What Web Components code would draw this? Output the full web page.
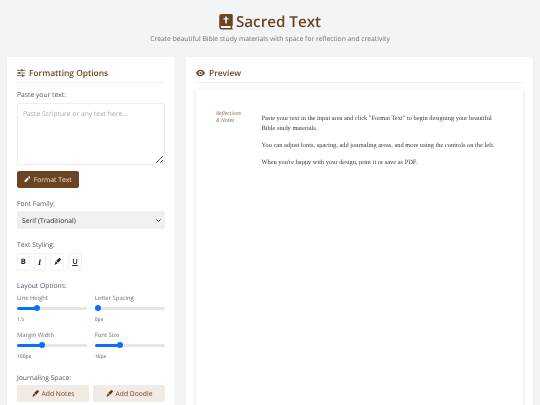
<!DOCTYPE html>
<html lang="en">
<head>
<meta charset="utf-8">
<title>Sacred Text</title>
<style>
html, body { margin: 0; height: 405px; overflow: hidden; background: #f3f4f6; }
body { font-family: "Open Sans", "Noto Sans", sans-serif; color: #374151; text-rendering: geometricPrecision; }
</style>
</head>
<body>
<sacred-app></sacred-app>

<script>
const BROWN = '#6b4423';

const icons = {
  sliders: '<svg viewBox="0 0 12 12" width="8" height="8"><g stroke="currentColor" stroke-width="1.2" fill="none"><path d="M0 2h12M0 6h12M0 10h12"/></g><g fill="currentColor"><rect x="6.500" y=".4" width="2" height="3.200" rx=".5"/><rect x="2.500" y="4.400" width="2" height="3.200" rx=".5"/><rect x="7.500" y="8.400" width="2" height="3.200" rx=".5"/></g></svg>',
  eye: '<svg viewBox="0 0 14 12" width="9" height="8"><path fill="currentColor" fill-rule="evenodd" d="M7 1C3.800 1 1.200 3 0 6c1.200 3 3.800 5 7 5s5.800-2 7-5c-1.200-3-3.800-5-7-5zm0 1.800a3.200 3.200 0 1 1 0 6.400 3.200 3.200 0 0 1 0-6.400z"/><circle cx="7" cy="6" r="1.700" fill="currentColor"/></svg>',
  pen: '<svg viewBox="0 0 12 12" width="6.500" height="6.500"><path fill="currentColor" d="M8.600.7a1.300 1.300 0 0 1 1.800 0l.9.9a1.300 1.300 0 0 1 0 1.800L10 4.700 7.300 2zM6.500 2.800l2.700 2.700L3.700 11H1v-2.700z"/></svg>',
  highlighter: '<svg viewBox="0 0 12 12" width="7" height="7"><path fill="currentColor" d="M8.700.5a1.200 1.200 0 0 1 1.700 0l1.100 1.100a1.200 1.200 0 0 1 0 1.700L7.200 8.200 3.800 4.800zM3.200 5.500l3.300 3.300-1.200 1.100H3.800L2.700 11H.5l1.800-2.400-.3-1.500z"/></svg>',
  book: '<svg viewBox="0 0 14 16" width="14" height="15.500"><path fill="currentColor" fill-rule="evenodd" d="M2.500 0H12.500A1.500 1.500 0 0 1 14 1.500V11.500c0 .5-.3.9-.7 1.100v1.900c.4.2.7.5.7 1 0 .3-.2.500-.5.500H2.500A2.500 2.500 0 0 1 0 13.500V2.500A2.500 2.500 0 0 1 2.500 0zM2.500 12.500a1 1 0 0 0 0 2h9.200v-2zM6.200 2.600v1.800H4.400v1.400h1.800v4h1.600v-4h1.800V4.400H7.800V2.600z"/></svg>'
};

class AppHeader extends HTMLElement {
  constructor() {
    super();
    this.attachShadow({mode: 'open'}).innerHTML = `
    <style>
      :host { display: block; text-align: center; box-sizing: border-box; padding-top: 14px; height: 57px; }
      h1 {
        margin: 0; display: flex; justify-content: center; align-items: center; gap: 3px;
        font-size: 15.200px; line-height: 16px; height: 16px; font-weight: 600; color: ${BROWN};
      }
      svg { display: block; }
      p { margin: 4px 0 0; font-size: 6.750px; line-height: 10px; color: #6b7280; }
    </style>
    <h1>${icons.book}<span>Sacred Text</span></h1>
    <p>Create beautiful Bible study materials with space for reflection and creativity</p>`;
  }
}

class PanelCard extends HTMLElement {
  constructor() {
    super();
    this.attachShadow({mode: 'open'}).innerHTML = `
    <style>
      :host {
        display: block; box-sizing: border-box; background: #fff; border-radius: 3px;
        padding: 10px; height: 360px; box-shadow: 0 1px 3px rgba(0,0,0,.05);
      }
      h2 {
        margin: 0 0 7px; padding-bottom: 3px; border-bottom: 1px solid #f0f0f0;
        display: flex; align-items: center; gap: 4px; height: 12px; box-sizing: content-box;
        font-size: 8.400px; font-weight: 600; color: ${BROWN};
      }
      ::slotted(span) { display: block; line-height: 0; }
    </style>
    <h2><slot name="icon"></slot><span>${this.getAttribute('heading')}</span></h2>
    <slot></slot>`;
  }
}

class RangeField extends HTMLElement {
  constructor() {
    super();
    const label = this.getAttribute('label');
    const value = this.getAttribute('value');
    const pct = this.getAttribute('pct');
    this.attachShadow({mode: 'open'}).innerHTML = `
    <style>
      :host { display: block; color: #4b5563; }
      label { display: block; line-height: 8px; height: 8px; font-size: 5.900px; color: #6b7280; }
      input {
        -webkit-appearance: none; appearance: none; display: block; width: 100%; margin: 3px 0 0;
        height: 6px; background: transparent;
      }
      input::-webkit-slider-runnable-track {
        height: 3px; border-radius: 2px;
        background: linear-gradient(to right, #0d6efd calc(3px + (100% - 6px) * ${pct / 100}), #e6e6e6 0);
      }
      input::-webkit-slider-thumb {
        -webkit-appearance: none; width: 6px; height: 6px; margin-top: -1.500px;
        border-radius: 50%; background: #0d6efd; border: 0;
      }
      span { display: block; margin-top: 5px; line-height: 8px; height: 8px; font-size: 5px; }
    </style>
    <label>${label}</label>
    <input type="range" min="0" max="100" value="${pct}">
    <span>${value}</span>`;
  }
}

class FormatPanel extends HTMLElement {
  constructor() {
    super();
    const chevron = "data:image/svg+xml,%3Csvg xmlns='http://www.w3.org/2000/svg' viewBox='0 0 10 6'%3E%3Cpath d='M1 1l4 4 4-4' fill='none' stroke='%23222' stroke-width='2'/%3E%3C/svg%3E";
    this.attachShadow({mode: 'open'}).innerHTML = `
    <style>
      :host { display: block; color: #4b5563; }
      button, select, textarea { text-rendering: geometricPrecision; }
      .lbl { display: block; font-size: 6.750px; line-height: 9px; height: 9px; color: #4b5563; }
      textarea {
        display: block; box-sizing: border-box; width: 100%; height: 62px; margin-top: 4px;
        padding: 5px; border: 1px solid #eceef0; border-radius: 2px; outline: 0;
        font: 6.750px/10px "Open Sans", sans-serif; color: #374151; background: #fff;
      }
      textarea::placeholder { color: #a4a8ae; opacity: 1; }
      .primary {
        display: flex; align-items: center; justify-content: center; gap: 3.500px; height: 17px; margin-top: 6px; padding: 0;
        width: 61.500px; box-sizing: border-box; white-space: nowrap;
        border: 0; border-radius: 2px; background: ${BROWN}; color: #eee5da;
        font: 6.750px "Open Sans", sans-serif;
      }
      .primary svg { color: #fff; }
      .font-lbl { margin-top: 10.500px; }
      select {
        -webkit-appearance: none; appearance: none;
        display: block; width: 100%; height: 18px; margin-top: 3.500px; padding: 0 5px; box-sizing: border-box;
        border: 0; border-radius: 2px; color: #2b2b2b; outline: 0;
        background: #f0f0f0 url("${chevron}") no-repeat right 4px center / 5px 3px;
        font: 6.750px "Open Sans", sans-serif;
      }
      .style-lbl { margin-top: 11px; }
      .tools { display: flex; gap: 4px; margin-top: 3.500px; }
      .tools button {
        width: 12.500px; height: 18px; padding: 0; display: flex; align-items: center; justify-content: center;
        background: #fff; border: 1px solid #f2f2f2; border-radius: 2px; color: #222;
        font: 7.500px "Open Sans", sans-serif;
      }
      .tools button.wide { width: 14px; }
      .tools b { font-weight: 700; }
      .tools i { font-family: "Liberation Serif", serif; font-weight: 700; font-size: 8.500px; }
      .tools u { font-weight: 600; }
      .layout-lbl { margin-top: 10.500px; }
      .grid { display: grid; grid-template-columns: 1fr 1fr; column-gap: 7.500px; row-gap: 7px; margin-top: 4px; }
      .journal-lbl { margin-top: 11.500px; }
      .pair { display: grid; grid-template-columns: 1fr 1fr; gap: 4px; margin-top: 3.500px; }
      .pair button {
        display: flex; align-items: center; justify-content: center; gap: 3px; height: 17px; padding: 0;
        border: 0; border-radius: 2px; background: #f2ebe4; color: ${BROWN};
        font: 6.750px "Open Sans", sans-serif;
      }
      .pair svg { color: #5a3a1e; }
    </style>
    <label class="lbl">Paste your text:</label>
    <textarea placeholder="Paste Scripture or any text here..."></textarea>
    <button class="primary">${icons.pen}Format Text</button>

    <label class="lbl font-lbl">Font Family:</label>
    <select><option>Serif (Traditional)</option><option>Sans Serif (Modern)</option></select>

    <label class="lbl style-lbl">Text Styling:</label>
    <div class="tools">
      <button><b>B</b></button>
      <button><i>I</i></button>
      <button class="wide">${icons.highlighter}</button>
      <button class="wide"><u>U</u></button>
    </div>

    <label class="lbl layout-lbl">Layout Options:</label>
    <div class="grid">
      <range-field label="Line Height" value="1.5" pct="26"></range-field>
      <range-field label="Letter Spacing" value="0px" pct="0"></range-field>
      <range-field label="Margin Width" value="100px" pct="34"></range-field>
      <range-field label="Font Size" value="16px" pct="34"></range-field>
    </div>

    <label class="lbl journal-lbl">Journaling Space:</label>
    <div class="pair">
      <button>${icons.highlighter}Add Notes</button>
      <button>${icons.highlighter}Add Doodle</button>
    </div>`;
  }
}

class PreviewSheet extends HTMLElement {
  constructor() {
    super();
    this.attachShadow({mode: 'open'}).innerHTML = `
    <style>
      :host {
        display: grid; grid-template-columns: 45.500px 1fr; box-sizing: border-box; height: 340px;
        padding: 20px 28px 0 20px; background: #fff;
        box-shadow: 0 1px 5px rgba(0,0,0,.12);
      }
      aside { font: italic 5.300px/7px "Open Sans", sans-serif; color: #8a6a50; }
      main { font: 6.400px/10px "Liberation Serif", serif; color: #3f3833; padding-top: 4px; }
      p { margin: 0 0 7px; }
    </style>
    <aside>Reflections<br>&amp; Notes</aside>
    <main>
      <p>Paste your text in the input area and click "Format Text" to begin designing your beautiful Bible study materials.</p>
      <p>You can adjust fonts, spacing, add journaling areas, and more using the controls on the left.</p>
      <p>When you're happy with your design, print it or save as PDF.</p>
    </main>`;
  }
}

class SacredApp extends HTMLElement {
  constructor() {
    super();
    this.attachShadow({mode: 'open'}).innerHTML = `
    <style>
      :host { display: block; height: 405px; overflow: hidden; will-change: transform; }
      .cols { display: grid; grid-template-columns: 168px 347px; gap: 11px; padding: 0 7px; }
      .ic { color: ${BROWN}; }
    </style>
    <app-header></app-header>
    <div class="cols">
      <panel-card heading="Formatting Options">
        <span slot="icon" class="ic">${icons.sliders}</span>
        <format-panel></format-panel>
      </panel-card>
      <panel-card heading="Preview">
        <span slot="icon" class="ic">${icons.eye}</span>
        <preview-sheet></preview-sheet>
      </panel-card>
    </div>`;
  }
}

customElements.define('app-header', AppHeader);
customElements.define('panel-card', PanelCard);
customElements.define('range-field', RangeField);
customElements.define('format-panel', FormatPanel);
customElements.define('preview-sheet', PreviewSheet);
customElements.define('sacred-app', SacredApp);
</script>
</body>
</html>
